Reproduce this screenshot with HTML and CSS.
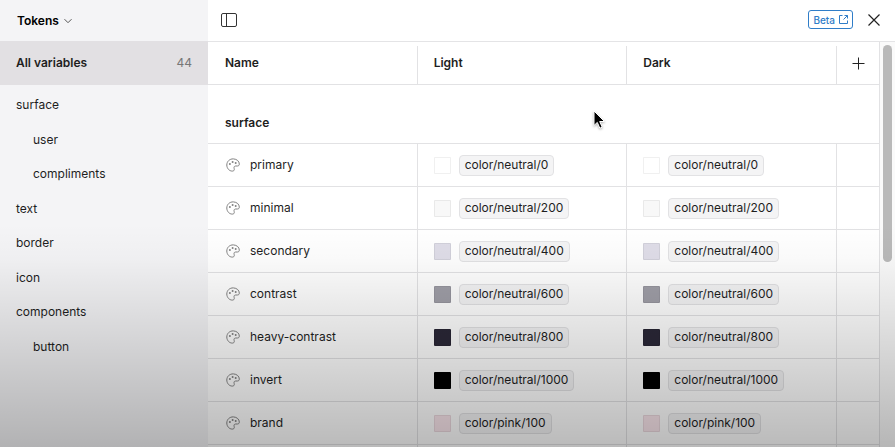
FILE: index.html
```html
<!DOCTYPE html>
<html lang="en">
<head>
    <meta charset="UTF-8">
    <meta name="viewport" content="width=device-width, initial-scale=1.0">
    <title>Tokens</title>
    <link rel="stylesheet" href="styles.css">
</head>
<body>
    <svg class="sprite" aria-hidden="true">
        <symbol id="palette" viewBox="0 0 14 14">
            <path d="M7.400 .9C3.600 .7 .8 3.500 .8 7c0 3.400 2.500 6.100 5.500 6.100 1.300 0 2-.7 2-1.700 0-.8-.3-1.200-.3-1.900 0-.9.7-1.500 1.700-1.500h1.700c1.200 0 1.900-.7 1.900-1.900C13.300 3.200 10.800 1.100 7.400 .9z" fill="none" stroke="currentColor"/>
            <circle cx="3.900" cy="5.900" r="1" fill="currentColor"/>
            <circle cx="6.600" cy="3.900" r="1" fill="currentColor"/>
            <circle cx="9.700" cy="5" r="1" fill="currentColor"/>
        </symbol>
    </svg>

    <div class="app">
        <aside class="sidebar">
            <button class="collection">Tokens
                <svg width="8" height="6" viewBox="0 0 8 6" fill="none" stroke="#555"><path d="M.5 1.200l3.500 3.500 3.500-3.500"/></svg>
            </button>
            <button class="all-variables"><span>All variables</span><span class="count">44</span></button>
            <nav class="groups">
                <button class="group">surface</button>
                <button class="group nested">user</button>
                <button class="group nested">compliments</button>
                <button class="group">text</button>
                <button class="group">border</button>
                <button class="group">icon</button>
                <button class="group">components</button>
                <button class="group nested">button</button>
            </nav>
        </aside>

        <main class="main">
            <header class="topbar">
                <button class="icon-btn" aria-label="Toggle sidebar">
                    <svg width="16" height="14" viewBox="0 0 16 14" fill="none" stroke="#333"><rect x=".5" y=".5" width="15" height="13" rx="1.500"/><path d="M5.500 .5v13"/></svg>
                </button>
                <div class="topbar-right">
                    <a class="beta" href="#">Beta
                        <svg width="9" height="9" viewBox="0 0 9 9" fill="none" stroke="currentColor"><path d="M3.500 .5h-3v8h8v-3M5.500 .5h3v3M8.500 .5l-4 4"/></svg>
                    </a>
                    <button class="icon-btn" aria-label="Close">
                        <svg width="12" height="12" viewBox="0 0 12 12" fill="none" stroke="#222" stroke-width="1.200"><path d="M.5 .5l11 11M11.500 .5l-11 11"/></svg>
                    </button>
                </div>
            </header>

            <div class="content">
                <table class="variables">
                    <colgroup>
                        <col><col><col><col class="col-add">
                    </colgroup>
                    <thead>
                        <tr>
                            <th>Name</th>
                            <th>Light</th>
                            <th>Dark</th>
                            <th class="add">
                                <button class="icon-btn" aria-label="Add mode">
                                    <svg width="13" height="13" viewBox="0 0 13 13" fill="none" stroke="#222"><path d="M6.500 .5v12M.5 6.500h12"/></svg>
                                </button>
                            </th>
                        </tr>
                    </thead>
                    <tbody>
                        <tr class="section"><th colspan="4">surface</th></tr>
                        <tr>
                            <td><div class="name"><svg class="palette"><use href="#palette"/></svg>primary</div></td>
                            <td><div class="value"><span class="swatch neutral-0"></span><button class="chip">color/neutral/0</button></div></td>
                            <td><div class="value"><span class="swatch neutral-0"></span><button class="chip">color/neutral/0</button></div></td>
                            <td></td>
                        </tr>
                        <tr>
                            <td><div class="name"><svg class="palette"><use href="#palette"/></svg>minimal</div></td>
                            <td><div class="value"><span class="swatch neutral-200"></span><button class="chip">color/neutral/200</button></div></td>
                            <td><div class="value"><span class="swatch neutral-200"></span><button class="chip">color/neutral/200</button></div></td>
                            <td></td>
                        </tr>
                        <tr>
                            <td><div class="name"><svg class="palette"><use href="#palette"/></svg>secondary</div></td>
                            <td><div class="value"><span class="swatch neutral-400"></span><button class="chip">color/neutral/400</button></div></td>
                            <td><div class="value"><span class="swatch neutral-400"></span><button class="chip">color/neutral/400</button></div></td>
                            <td></td>
                        </tr>
                        <tr>
                            <td><div class="name"><svg class="palette"><use href="#palette"/></svg>contrast</div></td>
                            <td><div class="value"><span class="swatch neutral-600"></span><button class="chip">color/neutral/600</button></div></td>
                            <td><div class="value"><span class="swatch neutral-600"></span><button class="chip">color/neutral/600</button></div></td>
                            <td></td>
                        </tr>
                        <tr>
                            <td><div class="name"><svg class="palette"><use href="#palette"/></svg>heavy-contrast</div></td>
                            <td><div class="value"><span class="swatch neutral-800"></span><button class="chip">color/neutral/800</button></div></td>
                            <td><div class="value"><span class="swatch neutral-800"></span><button class="chip">color/neutral/800</button></div></td>
                            <td></td>
                        </tr>
                        <tr>
                            <td><div class="name"><svg class="palette"><use href="#palette"/></svg>invert</div></td>
                            <td><div class="value"><span class="swatch neutral-1000"></span><button class="chip">color/neutral/1000</button></div></td>
                            <td><div class="value"><span class="swatch neutral-1000"></span><button class="chip">color/neutral/1000</button></div></td>
                            <td></td>
                        </tr>
                        <tr>
                            <td><div class="name"><svg class="palette"><use href="#palette"/></svg>brand</div></td>
                            <td><div class="value"><span class="swatch pink-100"></span><button class="chip">color/pink/100</button></div></td>
                            <td><div class="value"><span class="swatch pink-100"></span><button class="chip">color/pink/100</button></div></td>
                            <td></td>
                        </tr>
                        <tr><td></td><td></td><td></td><td></td></tr>
                    </tbody>
                </table>
                <div class="scrollbar"><div class="thumb"></div></div>
            </div>
        </main>

        <div class="shade"></div>
        <svg class="cursor" width="13" height="20" viewBox="0 0 13 20"><path d="M1 1v14.500l3.300-3.100 2.500 5.800 2.400-1-2.500-5.700h4.800z" fill="#000" stroke="#fff"/></svg>
    </div>
</body>
</html>
```
FILE: styles.css
```css
*{
    margin: 0;
    padding: 0;
    box-sizing: border-box;
}
body{
    font-family: Inter, "Liberation Sans", sans-serif;
    font-size: 12px;
    line-height: 16px;
    color: #1e1e1e;
    background-color: #fff;
}
button{
    font: inherit;
    color: inherit;
    background: none;
    border: none;
    text-align: left;
    cursor: pointer;
}
svg{
    display: block;
    flex: none;
}
.sprite{
    display: none;
}
.app{
    position: relative;
    display: flex;
    height: 100vh;
    overflow: hidden;
}

/* sidebar */
.sidebar{
    flex: none;
    display: flex;
    flex-direction: column;
    width: 208px;
    background-color: #f4f4f6;
}
.collection{
    display: flex;
    align-items: center;
    gap: 5px;
    height: 41px;
    padding: 0 17px;
    font-weight: 600;
    color: #000;
}
.all-variables{
    display: flex;
    align-items: center;
    justify-content: space-between;
    height: 44px;
    padding: 0 16px;
    font-weight: 600;
    background-color: #e2e0e3;
}
.count{
    font-weight: 400;
    color: #777;
}
.groups{
    display: grid;
    grid-auto-rows: 1fr;
    height: 276px;
    margin-top: 3px;
}
.group{
    padding: 0 16px;
}
.nested{
    padding-left: 33px;
}

/* main panel */
.main{
    flex: 1;
    display: flex;
    flex-direction: column;
    min-width: 0;
}
.topbar{
    flex: none;
    display: flex;
    align-items: center;
    justify-content: space-between;
    height: 42px;
    padding: 0 15px 2px 13px;
    border-bottom: 1px solid #e4e4e6;
}
.topbar-right{
    display: flex;
    align-items: center;
    gap: 15px;
}
.beta{
    display: flex;
    align-items: center;
    gap: 4px;
    height: 19px;
    padding: 0 4px;
    border: 1px solid #2f7dc8;
    border-radius: 3px;
    font-size: 10px;
    font-weight: 500;
    color: #2f7dc8;
    text-decoration: none;
}
.content{
    flex: 1;
    display: flex;
    align-items: flex-start;
    min-height: 0;
}
.variables{
    flex: 1;
    width: 100%;
    min-width: 0;
    table-layout: fixed;
    border-collapse: separate;
    border-spacing: 0;
}
.col-add{
    width: 42px;
}
th, td{
    height: 43px;
    padding: 0 0 0 16px;
    text-align: left;
    border-bottom: 1px solid #e2e2e4;
}
th:first-child, td:first-child{
    padding-left: 17px;
}
th{
    font-weight: 600;
    /* column line stops short of the top bar */
    background: linear-gradient(#e2e2e4, #e2e2e4) right bottom / 1px calc(100% - 4px) no-repeat;
}
td{
    border-right: 1px solid #e2e2e4;
}
th:last-child, td:last-child{
    background: none;
    border-right: none;
}
th.add{
    padding: 0;
}
.add .icon-btn{
    margin: 0 auto;
    display: block;
}
.section th{
    height: 59px;
    padding-top: 17px;
}
.name{
    display: flex;
    align-items: center;
    gap: 10px;
    padding-left: 1px;
}
.palette{
    width: 14px;
    height: 14px;
    color: #828282;
}
.value{
    display: flex;
    align-items: center;
    gap: 8px;
}
.chip{
    height: 21px;
    padding: 0 5px;
    border: 1px solid #e2e2e4;
    border-radius: 4px;
    background-color: #f4f4f5;
}
.swatch{
    width: 17px;
    height: 17px;
    border: 1px solid rgba(0,0,0,0.06);
    border-radius: 1px;
}
.neutral-0{ background-color: #fff; }
.neutral-200{ background-color: #f8f8f8; }
.neutral-400{ background-color: #dfdde8; }
.neutral-600{ background-color: #a09fa8; }
.neutral-800{ background-color: #2b2838; }
.neutral-1000{ background-color: #000; }
.pink-100{ background-color: #fae6ec; }

.scrollbar{
    flex: none;
    align-self: stretch;
    width: 16px;
    padding: 3px 3px 0 3px;
    background-color: #fafafa;
    border-left: 1px solid #e2e2e4;
}
.thumb{
    height: 54%;
    border-radius: 5px;
    background-color: #b9b9b9;
}

/* fade over the bottom half */
.shade{
    position: absolute;
    left: 0;
    right: 0;
    bottom: 0;
    height: 50%;
    background: linear-gradient(rgba(0,0,0,0), rgba(0,0,0,0.02) 15%, rgba(0,0,0,0.27));
    pointer-events: none;
}
.cursor{
    position: absolute;
    left: 593px;
    top: 110px;
    filter: drop-shadow(0 1px 1px rgba(0,0,0,0.3));
    pointer-events: none;
}
```
